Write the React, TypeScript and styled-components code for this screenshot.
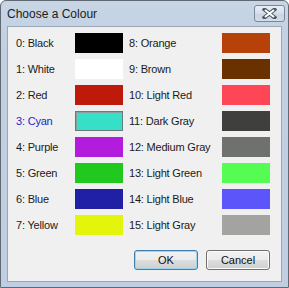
import React from 'react'
import styled, { createGlobalStyle } from 'styled-components'

const Global = createGlobalStyle`
    html, body {
        margin: 0;
        padding: 0;
        background: #ffffff;
    }
`

const Window = styled.div`
    width: 289px;
    height: 288px;
    box-sizing: border-box;
    border: 1px solid #5f6873;
    border-radius: 6px 6px 0 0;
    background: linear-gradient(#c7d5e5, #c2d1e2 40px, #bfcee0);
    display: flex;
    flex-direction: column;
    padding: 0 6px 5px 6px;
    font-family: "Liberation Sans", Arial, sans-serif;
`

const TitleBar = styled.div`
    height: 25px;
    display: flex;
    align-items: center;
    position: relative;
`

const Title = styled.div`
    font-size: 12px;
    color: #1b1b1b;
    padding-top: 1px;
`

const CloseButton = styled.div`
    position: absolute;
    right: -3px;
    top: 4px;
    width: 31px;
    height: 17px;
    box-sizing: border-box;
    border: 1px solid #7b8797;
    border-radius: 3px;
    background: linear-gradient(#e9eef4, #d5dee9 50%, #c9d4e1 51%, #d3dce8);
    display: flex;
    align-items: center;
    justify-content: center;
`

const Client = styled.div`
    flex: 1;
    background: #f0f0f0;
    border: 1px solid #9aa7b6;
    padding: 6px 11px 0 8px;
    display: flex;
    flex-direction: column;
`

const Grid = styled.div`
    display: grid;
    grid-template-columns: 59px 48px 6px 93px 48px;
    grid-auto-rows: 20px;
    row-gap: 6px;
`

const Label = styled.div<{ $selected?: boolean }>`
    font-size: 11px;
    letter-spacing: -0.2px;
    color: ${({ $selected }) => ($selected ? '#2424c8' : '#1a1a1a')};
    display: flex;
    align-items: center;
`

const Swatch = styled.div<{ $color: string; $selected?: boolean }>`
    background-color: ${({ $color }) => $color};
    box-sizing: border-box;
    border: ${({ $selected }) => ($selected ? '1px solid #667c7c' : 'none')};
    box-shadow: ${({ $selected }) => ($selected ? 'inset 1px 1px 0 #8aa0a0' : 'none')};
`

const Spacer = styled.div``

const ButtonRow = styled.div`
    display: flex;
    justify-content: flex-end;
    gap: 8px;
    margin-top: 15px;
`

const Button = styled.button<{ $default?: boolean }>`
    width: 64px;
    height: 20px;
    box-sizing: border-box;
    font-family: "Liberation Sans", Arial, sans-serif;
    font-size: 11px;
    color: #111111;
    border: 1px solid ${({ $default }) => ($default ? '#3c7fb1' : '#707070')};
    border-radius: 3px;
    background: linear-gradient(#f2f2f2, #ebebeb 50%, #dddddd 51%, #cfcfcf);
    box-shadow: inset 0 0 0 1px ${({ $default }) => ($default ? '#9fd4f0' : '#fbfbfb')};
    padding: 0;
`

const colours = [
    { name: 'Black', hex: '#000000' },
    { name: 'White', hex: '#ffffff' },
    { name: 'Red', hex: '#be1a0b' },
    { name: 'Cyan', hex: '#36e0c6' },
    { name: 'Purple', hex: '#b11cdd' },
    { name: 'Green', hex: '#21c91f' },
    { name: 'Blue', hex: '#2020a6' },
    { name: 'Yellow', hex: '#e2f50a' },
    { name: 'Orange', hex: '#b6420a' },
    { name: 'Brown', hex: '#6a3100' },
    { name: 'Light Red', hex: '#fe4657' },
    { name: 'Dark Gray', hex: '#3f403e' },
    { name: 'Medium Gray', hex: '#6e716e' },
    { name: 'Light Green', hex: '#55fd52' },
    { name: 'Light Blue', hex: '#5b55fa' },
    { name: 'Light Gray', hex: '#a3a3a1' },
]

const selected = 3

function CloseIcon() {
    return (
        <svg width="15" height="11" viewBox="0 0 15 11">
            <path d="M2.5 1.5 L12.5 9.5 M12.5 1.5 L2.5 9.5" stroke="#4d5a6a" strokeWidth="4" strokeLinecap="square" />
            <path d="M3 2 L12 9 M12 2 L3 9" stroke="#ffffff" strokeWidth="2" />
        </svg>
    )
}

function App() {
    const rows = colours.slice(0, 8).map((left, i) => {
        const right = colours[i + 8]
        return (
            <React.Fragment key={i}>
                <Label $selected={i === selected}>{i}: {left.name}</Label>
                <Swatch $color={left.hex} $selected={i === selected} />
                <Spacer />
                <Label>{i + 8}: {right.name}</Label>
                <Swatch $color={right.hex} />
            </React.Fragment>
        )
    })

    return (
        <>
            <Global />
            <Window>
                <TitleBar>
                    <Title>Choose a Colour</Title>
                    <CloseButton>
                        <CloseIcon />
                    </CloseButton>
                </TitleBar>
                <Client>
                    <Grid>{rows}</Grid>
                    <ButtonRow>
                        <Button $default>OK</Button>
                        <Button>Cancel</Button>
                    </ButtonRow>
                </Client>
            </Window>
        </>
    )
}

export default App
